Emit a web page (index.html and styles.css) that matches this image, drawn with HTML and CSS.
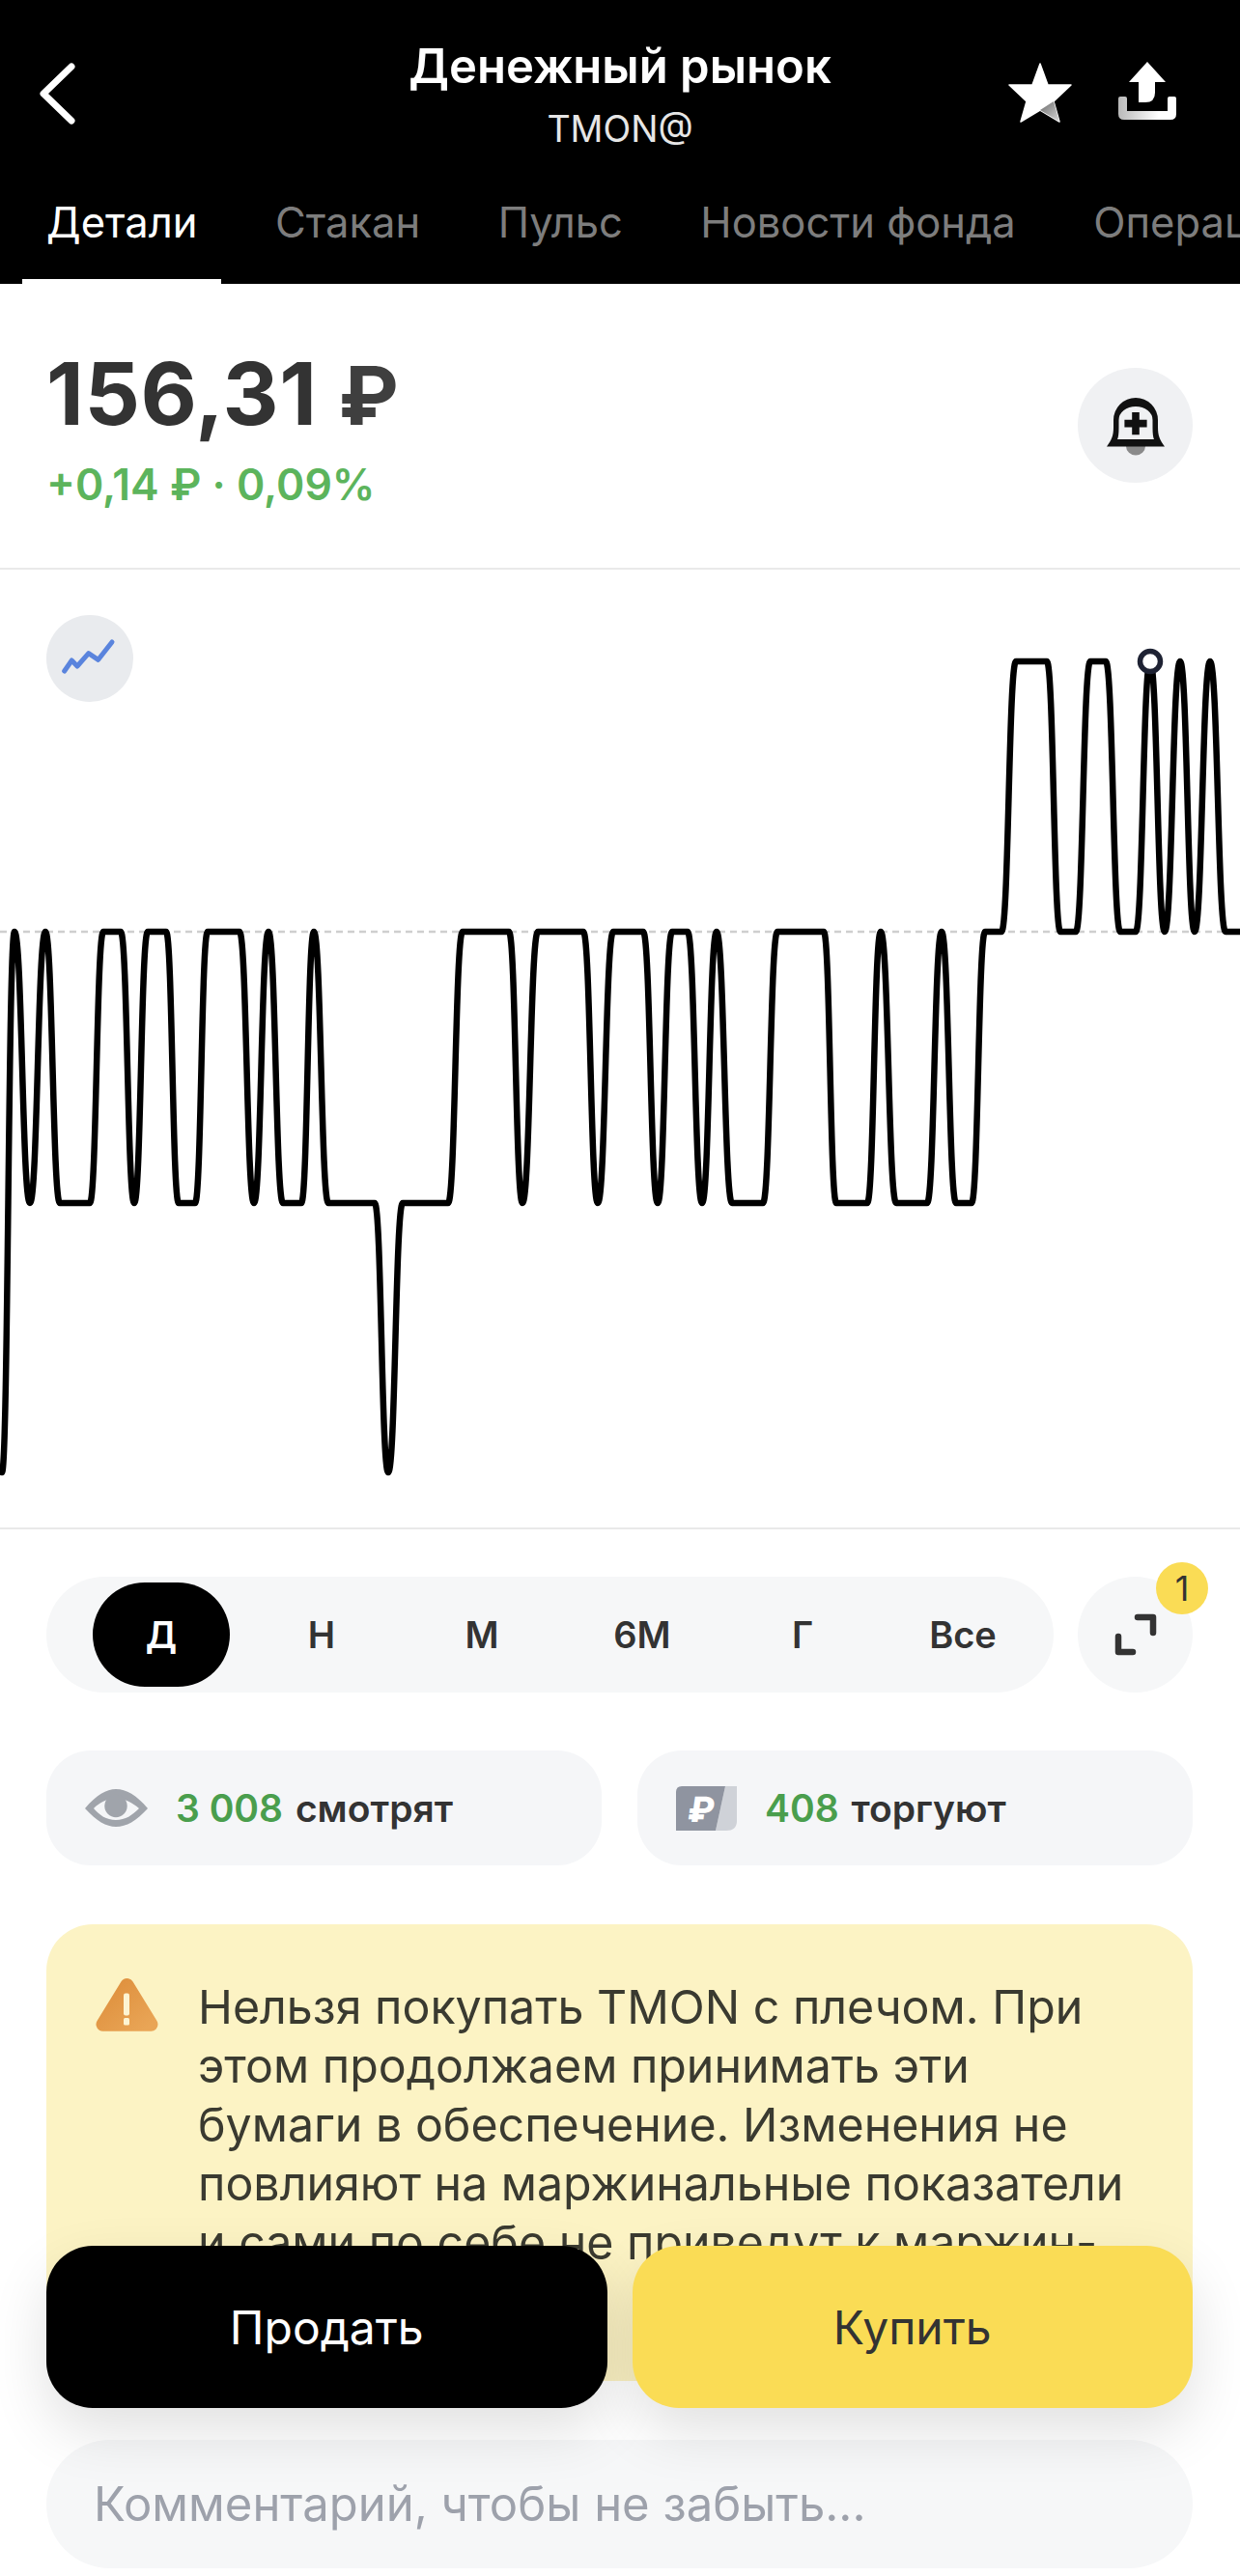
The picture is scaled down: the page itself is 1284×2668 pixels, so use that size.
FILE: index.html
```html
<!DOCTYPE html>
<html lang="ru">
<head>
<meta charset="utf-8">
<meta name="viewport" content="width=device-width, initial-scale=1.0">
<title>Денежный рынок</title>
<link rel="stylesheet" href="styles.css">
</head>
<body>
<div class="page">

  <div class="header">
    <div class="topbar">
      <div class="back">
        <svg width="40" height="64" viewBox="0 0 40 64"><polyline points="34,4 5,32 34,60" fill="none" stroke="#fff" stroke-width="7" stroke-linecap="round" stroke-linejoin="round"/></svg>
      </div>
      <div class="titles">
        <div class="title">Денежный рынок</div>
        <div class="ticker">TMON@</div>
      </div>
      <div class="head-icons">
        <svg class="head-icon" width="68" height="64" viewBox="0 0 68 64">
          <defs>
            <linearGradient id="starleg" x1="0" y1="0" x2="1" y2="1"><stop offset="0" stop-color="#6a6a6a"/><stop offset="1" stop-color="#d8d8d8"/></linearGradient>
          </defs>
          <path d="M33 2 L41 24 L65 24 L47 41 L53 62 L33 50 L13 62 L19 41 L1 24 L25 24 Z" fill="#fff" stroke="#fff" stroke-width="1.5" stroke-linejoin="round"/>
          <path d="M47 41 L53 62 L33 50 Z" fill="url(#starleg)"/>
        </svg>
        <svg class="head-icon" width="60" height="60" viewBox="0 0 60 60">
          <defs>
            <linearGradient id="tray" x1="0" y1="0" x2="1" y2="0"><stop offset="0" stop-color="#b9b9b9"/><stop offset="0.7" stop-color="#fff"/></linearGradient>
          </defs>
          <path d="M30 0 L49 21 L38 21 V32 Q38 42 28 42 H21 V21 H11 Z" fill="#fff"/>
          <path d="M0 38 Q0 36 2 36 H7 Q9 36 9 38 V51 H51 V38 Q51 36 53 36 H58 Q60 36 60 38 V54 Q60 60 54 60 H6 Q0 60 0 54 Z" fill="url(#tray)"/>
        </svg>
      </div>
    </div>
    <div class="tabs">
      <div class="tab active">Детали</div>
      <div class="tab">Стакан</div>
      <div class="tab">Пульс</div>
      <div class="tab">Новости фонда</div>
      <div class="tab">Операции</div>
    </div>
  </div>

  <div class="quote">
    <div>
      <div class="price">156,31 <span class="currency">₽</span></div>
      <div class="change">+0,14 ₽ · 0,09%</div>
    </div>
    <div class="bell">
      <svg width="119" height="119" viewBox="0 0 119 119">
        <path d="M50 81 a10 9.5 0 0 0 20 0 Z" fill="#8a8a8a"/>
        <path fill-rule="evenodd" fill="#111" d="M30 81.5 C35 75 37 70 37 62 V54 A23 23 0 0 1 83 54 V62 C83 70 85 75 90 81.5 Z M41 74 H79 C78 72 77.5 68 77.5 62 V54 A17.5 14 0 0 0 42.5 54 V62 C42.5 68 42 72 41 74 Z"/>
        <path d="M56.2 46 h7.6 v7.8 h7.8 v7.6 h-7.8 v7.8 h-7.6 v-7.8 h-7.8 v-7.6 h7.8 Z" fill="#111"/>
      </svg>
    </div>
  </div>

  <div class="chart">
    <div class="chart-type">
      <svg width="90" height="90" viewBox="0 0 90 90"><polyline points="18.7,58 26.3,47 32,53 43.7,39.7 53.7,46.3 68,28" fill="none" stroke="#5a84dd" stroke-width="5" stroke-linecap="round" stroke-linejoin="round"/></svg>
    </div>
    <svg class="plot" width="1284" height="990" viewBox="0 0 1284 990">
      <line x1="0" y1="374" x2="1284" y2="374" stroke="#cfcfcf" stroke-width="2.5" stroke-dasharray="7 5"/>
      <path fill="none" stroke="#000" stroke-width="6.5" stroke-linejoin="round" stroke-linecap="round" d="M2 934
        c6.5 0 6.5 -560 13 -560 c8 0 8 281 16 281 c8 0 8 -281 16 -281 c7.5 0 7.5 281 15 281 h31
        c7 0 7 -281 14 -281 h18 c7 0 7 281 14 281 c7 0 7 -281 14 -281 h19 c6.5 0 6.5 281 13 281 h17
        c6.5 0 6.5 -281 13 -281 h33 c7.5 0 7.5 281 15 281 c7.5 0 7.5 -281 15 -281 c7.5 0 7.5 281 15 281 h19
        c6.5 0 6.5 -281 13 -281 c7.5 0 7.5 281 15 281 h48 c7 0 7 279 14 279 c7.5 0 7.5 -279 15 -279 h47
        c7.5 0 7.5 -281 15 -281 h48 c7 0 7 281 14 281 c8 0 8 -281 16 -281 h47 c7.5 0 7.5 281 15 281
        c8 0 8 -281 16 -281 h31 c7.5 0 7.5 281 15 281 c7.5 0 7.5 -281 15 -281 h16 c7.5 0 7.5 281 15 281
        c7.5 0 7.5 -281 15 -281 c8 0 8 281 16 281 h32 c7.5 0 7.5 -281 15 -281 h48 c6.5 0 6.5 281 13 281 h32
        c7 0 7 -281 14 -281 c8 0 8 281 16 281 h32 c7.5 0 7.5 -281 15 -281 c7.5 0 7.5 281 15 281 h16
        c7 0 7 -281 14 -281 h17 c7.5 0 7.5 -280 15 -280 h32 c7 0 7 280 14 280 h16 c7.5 0 7.5 -280 15 -280 h16
        c7.5 0 7.5 280 15 280 h16 c7.5 0 7.5 -280 15 -280 c7.5 0 7.5 280 15 280 c8 0 8 -280 16 -280
        c7.5 0 7.5 280 15 280 c8 0 8 -280 16 -280 c8 0 8 280 16 280 h20"/>
      <circle cx="1191" cy="94" r="10.5" fill="#fff" stroke="#1e2233" stroke-width="5.5"/>
    </svg>
  </div>

  <div class="content">
    <div class="period-row">
      <div class="periods">
        <div class="period"><span class="selected">Д</span></div>
        <div class="period">Н</div>
        <div class="period">М</div>
        <div class="period">6М</div>
        <div class="period">Г</div>
        <div class="period">Все</div>
      </div>
      <div class="expand">
        <svg width="119" height="119" viewBox="0 0 119 119"><path d="M62 42 H78 V58 M42 62 V78 H57" fill="none" stroke="#333" stroke-width="6.5" stroke-linecap="round" stroke-linejoin="round"/></svg>
        <div class="badge">1</div>
      </div>
    </div>

    <div class="stats">
      <div class="stat">
        <svg width="65" height="40" viewBox="0 0 65 40">
          <path fill-rule="evenodd" fill="#a0a4ab" d="M0 20 C12 6 22 0 32 0 C43 0 53 6 65 20 C53 33 43 39 32 39 C22 39 12 33 0 20 Z M9 20 C15 27 22 32 32 32 C42 32 49 27 56 20 C49 14 42 10 32 10 C22 10 15 14 9 20 Z"/>
          <circle cx="32" cy="17.5" r="11.7" fill="#a0a4ab"/>
        </svg>
        <div class="stat-text"><span class="num">3 008</span> смотрят</div>
      </div>
      <div class="stat">
        <svg width="63" height="46" viewBox="0 0 63 46">
          <path d="M41 46 L51 0 H63 V36 Q63 46 52 46 Z" fill="#cfd2d8"/>
          <path d="M6 0 H51 L41 46 H0 V6 Q0 0 6 0 Z" fill="#8f94a0"/>
          <text class="rub" x="11" y="37" transform="skewX(-8) translate(5 0)">₽</text>
        </svg>
        <div class="stat-text"><span class="num">408</span> торгуют</div>
      </div>
    </div>

    <div class="notice">
      <svg class="notice-icon" width="65" height="56" viewBox="0 0 65 56">
        <defs>
          <linearGradient id="warn" x1="0" y1="0" x2="1" y2="1"><stop offset="0" stop-color="#de8f3c"/><stop offset="1" stop-color="#e9a556"/></linearGradient>
        </defs>
        <polygon points="32.5,8 7.5,48.7 57.5,48.7" fill="url(#warn)" stroke="url(#warn)" stroke-width="14" stroke-linejoin="round"/>
        <rect x="29" y="16.5" width="6" height="23" rx="2" fill="#fdf4d2"/>
        <rect x="29" y="42" width="6" height="7.5" rx="1.5" fill="#fdf4d2"/>
      </svg>
      <div class="notice-text">Нельзя покупать TMON с плечом. При<br>этом продолжаем принимать эти<br>бумаги в обеспечение. Изменения не<br>повлияют на маржинальные показатели<br>и сами по себе не приведут к маржин-</div>
    </div>

    <div class="comment">Комментарий, чтобы не забыть...</div>
  </div>

  <div class="actions">
    <div class="action sell">Продать</div>
    <div class="action buy">Купить</div>
  </div>

</div>
</body>
</html>
```

FILE: styles.css
```css
* {
  margin: 0;
  padding: 0;
  box-sizing: border-box;
}
body {
  background: #fff;
  font-family: Inter, "Liberation Sans", sans-serif;
  color: #333;
}
.page {
  position: relative;
  width: 1284px;
  height: 2668px;
  overflow: hidden;
}
svg {
  display: block;
}

/* header */
.header {
  height: 294px;
  background: #000;
  color: #fff;
}
.topbar {
  display: grid;
  grid-template-columns: 260px 1fr 260px;
  height: 174px;
}
.back {
  padding: 65px 0 0 40px;
}
.titles {
  padding-top: 39px;
  text-align: center;
}
.title {
  font-size: 49px;
  font-weight: 600;
  line-height: 60px;
}
.ticker {
  margin-top: 10px;
  font-size: 37.5px;
  line-height: 50px;
  color: #e6e6e6;
}
.head-icons {
  display: flex;
  justify-content: flex-end;
  gap: 46px;
  padding: 64px 66px 0 0;
}
.head-icon {
  flex: none;
}
.tabs {
  display: flex;
  gap: 30.5px;
  padding-left: 23px;
  overflow: hidden;
}
.tab {
  flex: none;
  height: 120px;
  padding: 26px 25px 0;
  font-size: 43.5px;
  line-height: 60px;
  color: #7d7d7d;
}
.tab.active {
  color: #fff;
  border-bottom: 5px solid #fff;
}

/* price */
.quote {
  display: flex;
  justify-content: space-between;
  height: 296px;
  padding: 64px 49px 0 48px;
  border-bottom: 2px solid #e9e9e9;
}
.price {
  font-size: 90px;
  font-weight: 700;
  line-height: 100px;
  letter-spacing: 0.6px;
  color: #333;
}
.currency {
  font-size: 84px;
  color: #3f3f3f;
}
.change {
  margin-top: 17px;
  font-size: 44.5px;
  font-weight: 600;
  line-height: 50px;
  color: #5cb45c;
}
.bell {
  width: 119px;
  height: 119px;
  margin-top: 23px;
  border-radius: 50%;
  background: #f0f1f3;
}

/* chart */
.chart {
  position: relative;
  height: 994px;
  padding-top: 1px;
  border-bottom: 2px solid #e9e9e9;
}
.chart-type {
  position: absolute;
  top: 47px;
  left: 48px;
  width: 90px;
  height: 90px;
  border-radius: 50%;
  background: #e9ebee;
}

/* periods */
.content {
  padding: 49px 49px 0 48px;
}
.period-row {
  display: flex;
  gap: 25px;
}
.periods {
  display: grid;
  grid-template-columns: repeat(6, 166px);
  flex: 1;
  height: 120px;
  padding-left: 36px;
  border-radius: 60px;
  background: #f6f7f8;
}
.period {
  display: flex;
  align-items: center;
  justify-content: center;
  font-size: 38px;
  font-weight: 600;
}
.selected {
  display: flex;
  align-items: center;
  justify-content: center;
  width: 142px;
  height: 108px;
  border-radius: 54px;
  background: #000;
  color: #fff;
}
.expand {
  position: relative;
  flex: none;
  width: 119px;
  height: 120px;
  border-radius: 50%;
  background: #f6f7f8;
}
.badge {
  position: absolute;
  top: -15px;
  right: -16px;
  width: 54px;
  height: 54px;
  border-radius: 50%;
  background: #fadc55;
  font-size: 36px;
  line-height: 54px;
  text-align: center;
}

/* stats */
.stats {
  display: flex;
  gap: 37px;
  margin-top: 60px;
}
.stat {
  display: flex;
  flex: 1;
  align-items: center;
  gap: 29px;
  height: 119px;
  padding-left: 40px;
  border-radius: 46px;
  background: #f5f6f8;
}
.stat-text {
  font-size: 39px;
  font-weight: 600;
}
.num {
  margin-right: 3px;
  color: #4a9e4d;
}
.rub {
  font-family: Inter, "Liberation Sans", sans-serif;
  font-size: 36px;
  font-weight: 800;
  fill: #fff;
}

/* notice */
.notice {
  display: flex;
  gap: 41px;
  height: 473px;
  margin-top: 61px;
  padding: 55px 0 0 51px;
  border-radius: 48px;
  background: #fcf3c4;
}
.notice-icon {
  flex: none;
}
.notice-text {
  font-size: 48.3px;
  line-height: 61px;
  white-space: nowrap;
  color: #3a3a30;
}

.comment {
  height: 133px;
  margin-top: 61px;
  padding-left: 49px;
  border-radius: 66px;
  background: #f6f7f8;
  font-size: 49px;
  line-height: 133px;
  color: #9da1ab;
}

/* floating buttons */
.actions {
  position: absolute;
  left: 48px;
  right: 49px;
  bottom: 174px;
  display: flex;
  gap: 26px;
}
.action {
  flex: 1;
  height: 168px;
  border-radius: 48px;
  font-size: 48px;
  line-height: 170px;
  text-align: center;
  box-shadow: 0 24px 60px rgba(0, 0, 0, 0.12);
}
.sell {
  background: #000;
  color: #fff;
}
.buy {
  background: #fadc55;
  color: #333;
}
```
